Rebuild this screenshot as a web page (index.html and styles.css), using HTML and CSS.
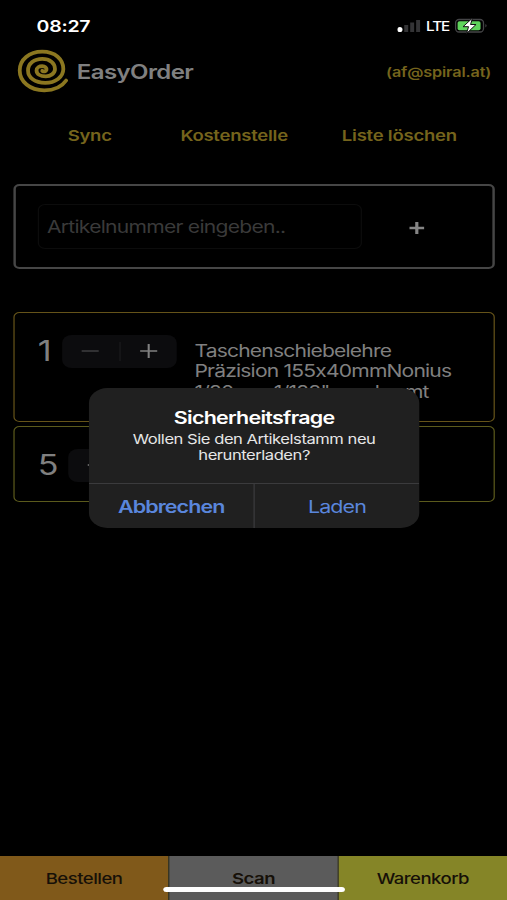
FILE: index.html
```html
<!DOCTYPE html>
<html lang="de">
<head>
<meta charset="utf-8">
<title>EasyOrder</title>
<link rel="stylesheet" href="styles.css">
</head>
<body>
<div class="screen">
  <div class="status">
    <span class="time">08:27</span>
    <div class="status-right">
      <svg class="signal" viewBox="0 0 24 14" preserveAspectRatio="none"><circle cx="2.6" cy="10.5" r="2.6" fill="#fff"/><path d="M7 6h4v7H7zM13 3.500h4V13h-4zM19 1h4v12h-4z" fill="#343436"/></svg>
      <span class="lte">LTE</span>
      <svg class="battery" viewBox="0 0 33 16" preserveAspectRatio="none"><rect x="1" y="1.500" width="28" height="12.500" rx="3.500" fill="none" stroke="#454547" stroke-width="1.300"/><path d="M31 6q2 1.700 0 3.500z" fill="#555"/><rect x="3" y="3.300" width="23" height="9" rx="1.800" fill="#5fd45c"/><path d="M18 0 8.500 8.700h5.500L12 15.500 21.500 6.500H16z" fill="#fff" stroke="#111" stroke-width="1"/></svg>
    </div>
  </div>
  <header class="header">
    <svg class="logo" viewBox="12 44 62 54" preserveAspectRatio="none"><path d="M65.800 80.500C61 87.500 53 90.300 44 90.300C29.500 90.300 19.500 81.500 19.500 70.500C19.500 59.500 29 51.700 42 51.700C55 51.700 63 59.500 63 69C63 77 55 82.800 45 82.800C34.500 82.800 27.800 77.500 27.800 70.500C27.800 63.500 34 58.900 42 58.900C49.500 58.900 54.700 63 54.700 69C54.700 73.500 50 76.400 45.500 76.400C40 76.400 36.300 74 36.300 70.500C36.300 67.700 39 66.200 42 66.200C45 66.200 46.600 68 46.200 69.800C45.700 71.500 43.500 71.800 42 70.800"/></svg>
    <h1 class="brand">EasyOrder</h1>
    <span class="mail">(af@spiral.at)</span>
  </header>
  <nav class="actions"><span class="a1">Sync</span><span class="a2">Kostenstelle</span><span class="a3">Liste löschen</span></nav>
  <section class="entry">
    <div class="field">Artikelnummer eingeben..</div>
    <svg class="add" viewBox="0 0 14 14"><path d="M7 1v12M1 7h12"/></svg>
  </section>
  <section class="item first">
    <span class="qty">1</span>
    <div class="stepper"><svg viewBox="0 0 20 20"><path d="M3 10h14"/></svg><i></i><svg class="plus" viewBox="0 0 20 20"><path d="M3 10h14M10 3v14"/></svg></div>
    <p class="desc">Taschenschiebelehre<br>Präzision 155x40mmNonius<br>1/20mm 1/128" verchromt</p>
  </section>
  <section class="item second">
    <span class="qty">5</span>
    <div class="stepper"><svg class="plus" viewBox="0 0 20 20"><path d="M3 10h14"/></svg><i></i><svg class="plus" viewBox="0 0 20 20"><path d="M3 10h14M10 3v14"/></svg></div>
  </section>
  <div class="dialog">
    <div class="message">
      <h2>Sicherheitsfrage</h2>
      <p>Wollen Sie den Artikelstamm neu<br>herunterladen?</p>
    </div>
    <div class="buttons"><span class="cancel">Abbrechen</span><span class="load">Laden</span></div>
  </div>
  <footer class="tabs"><span class="order">Bestellen</span><span class="scan">Scan</span><span class="cart">Warenkorb</span></footer>
  <div class="home"></div>
</div>
</body>
</html>
```
FILE: styles.css
```css
* { box-sizing: border-box; }
html { overflow: hidden; background: #000; }
body { margin: 0; width: 507px; height: 900px; overflow: hidden; background: #000; }
h1, h2, p { margin: 0; }

/* The phone layout is 416px wide and is widened to fill the window. */
.screen {
  position: relative;
  display: flex;
  flex-direction: column;
  width: 416px;
  height: 900px;
  transform: scaleX(1.21875);
  transform-origin: 0 0;
  background: #000;
  color: #808080;
  font-family: Inter, "Liberation Sans", sans-serif;
  font-feature-settings: "calt" 0;
  white-space: nowrap;
}

.status { display: flex; justify-content: space-between; align-items: center; height: 52px; padding: 0 17px 0 30px; color: #fff; }
.time { font-size: 16px; font-weight: 600; letter-spacing: -.2px; }
.status-right { display: flex; align-items: center; }
.signal { width: 19.500px; height: 14px; margin-right: 4px; }
.lte { font-size: 12.500px; font-weight: 500; letter-spacing: -.9px; margin-right: 4px; }
.battery { width: 27px; height: 16px; margin-right: -.5px; }

.header { display: flex; align-items: center; height: 38px; padding: 0 13px 0 10px; }
.logo { width: 51px; height: 54px; fill: none; stroke: #8b7720; stroke-width: 3.8; stroke-linecap: round; }
.brand { margin: 1px 0 0 2px; font-size: 19.700px; font-weight: 600; letter-spacing: -.48px; }
.mail { margin: 1px 0 0 auto; font-size: 13.300px; font-weight: 600; letter-spacing: -.12px; color: #75641c; }

.actions { display: flex; height: 94px; line-height: 92px; padding-left: 55.500px; color: #75641c; font-size: 15.200px; font-weight: 600; letter-spacing: -.2px; }
.a1 { width: 92.500px; }
.a2 { width: 132.500px; }

.entry { display: flex; align-items: center; height: 85px; margin: 0 10px 0 11px; padding-left: 17.500px; border: 2px solid #464646; border-radius: 5px; }
.field { width: 266px; height: 45px; line-height: 43px; padding-left: 7px; border: 1px solid #0c0c0c; border-radius: 6px; color: #3a3a3a; font-size: 17.300px; letter-spacing: -.6px; }
.add { width: 14px; height: 14px; margin: 3px 0 0 38.500px; fill: none; stroke: #858585; stroke-width: 2.6; }

.item { display: flex; margin: 0 10px 0 11px; padding-left: 19px; border: 1px solid #655319; border-radius: 5px; }
.first { height: 110px; margin-top: 43px; }
.second { height: 76px; margin-top: 4px; border-color: #5b5a1c; }
.qty { font-size: 28px; line-height: 34px; margin-top: 21px; width: 20px; }
.second .qty { width: 25px; }
.stepper { display: flex; align-items: center; width: 94px; height: 33px; margin-top: 22px; border-radius: 8px; background: #0c0c0e; }
.stepper svg { width: 20px; height: 20px; margin: -1px auto 0; fill: none; stroke: #3e3e40; stroke-width: 1.7; }
.stepper .plus { stroke: #808080; }
.stepper i { width: 1px; height: 19px; background: #1b1b1d; }
.desc { margin: 28px 0 0 14.500px; font-size: 17.300px; line-height: 20.400px; letter-spacing: -.66px; }

.dialog { position: absolute; left: 73px; top: 388px; width: 271px; height: 140px; border-radius: 15px; background: #202020; overflow: hidden; text-align: center; }
.message { height: 96px; padding-top: 18px; border-bottom: 1px solid #3b3b3d; }
.message h2 { font-size: 17.600px; line-height: 24px; font-weight: 600; letter-spacing: -.6px; color: #fff; }
.message p { font-size: 13.600px; line-height: 16px; margin-top: 1px; letter-spacing: -.38px; color: #e6e6e6; }
.buttons { display: flex; height: 44px; line-height: 46px; font-size: 17.600px; letter-spacing: -.75px; color: #5a86dc; }
.buttons span { flex: 1; }
.cancel { font-weight: 600; border-right: 1px solid #3b3b3d; }

.tabs { display: flex; margin-top: auto; height: 44.500px; line-height: 46px; text-align: center; color: #161008; font-size: 15.200px; font-weight: 500; letter-spacing: -.42px; }
.tabs span { flex: 1; }
.order { background: #80591a; }
.scan { background: #5b5b5b; border: solid #33301c; border-width: 0 1px; font-weight: 600; }
.cart { background: #858527; }
.home { position: absolute; left: 134px; top: 887px; width: 148.500px; height: 5px; border-radius: 3px; background: #fff; }
```
